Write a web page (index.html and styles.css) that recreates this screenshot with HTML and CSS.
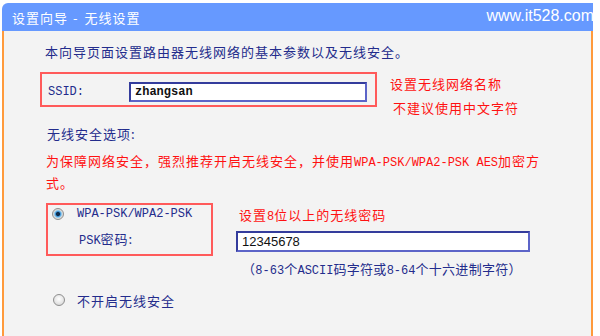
FILE: index.html
```html
<!DOCTYPE html>
<html lang="zh-CN">
<head>
  <meta charset="UTF-8" />
  <title>设置向导 - 无线设置</title>
  <link rel="stylesheet" href="styles.css">
</head>
<body>
  <div class="panel">
    <div class="titlebar">
      <span class="title">设置向导<span class="dash">-</span>无线设置</span>
      <span class="site">www.it528.com</span>
    </div>

    <div class="content">
      <p class="intro">本向导页面设置路由器无线网络的基本参数以及无线安全。</p>

      <div class="ssid-row">
        <div class="redbox ssid-box">
          <label class="en ssid-label">SSID:</label>
          <input class="text-input ssid-input" type="text" value="zhangsan" />
        </div>
        <div class="note ssid-note">
          <div>设置无线网络名称</div>
          <div class="note-second">不建议使用中文字符</div>
        </div>
      </div>

      <p class="section-label">无线安全选项:</p>
      <p class="warn">为保障网络安全，强烈推荐开启无线安全，并使用<span class="en">WPA-PSK/WPA2-PSK AES</span>加密方<br>式。</p>

      <div class="wpa-row">
        <div class="redbox wpa-box">
          <div class="radio-line">
            <span class="radio on"></span>
            <span class="en">WPA-PSK/WPA2-PSK</span>
          </div>
          <div class="psk-label"><span class="en">PSK</span>密码:</div>
        </div>
        <div class="wpa-fields">
          <div class="note">设置<span class="en">8</span>位以上的无线密码</div>
          <input class="text-input psk-input" type="text" value="12345678" />
          <div class="hint">（<span class="en">8-63</span>个<span class="en">ASCII</span>码字符或<span class="en">8-64</span>个十六进制字符）</div>
        </div>
      </div>

      <div class="radio-line off-line">
        <span class="radio"></span>
        <span>不开启无线安全</span>
      </div>
    </div>
  </div>
</body>
</html>
```

FILE: styles.css
```css
:root {
  --blue: #6699ff;
  --orange: #ff9a3c;
  --panel: #f3f3f3;
  --navy: #232c8c;
  --red: #ff1111;
  --box-red: #ff5a5a;
}

* { box-sizing: border-box; }

html, body {
  margin: 0;
  background: #ffffff;
  font-family: "Noto Sans CJK SC", "DejaVu Sans", sans-serif;
  font-size: 13px;
  letter-spacing: 1px;
  color: var(--navy);
}

p { margin: 0; }

.en {
  font-family: "Liberation Mono", monospace;
  font-size: 12px;
  letter-spacing: 0;
}

.panel {
  width: 591px;
  margin: 3px 0 0 2px;
}

.titlebar {
  height: 28px;
  display: flex;
  align-items: center;
  justify-content: space-between;
  padding-left: 10px;
  background: var(--blue);
  border-top-left-radius: 6px;
  color: #ffffff;
  overflow: hidden;
}

.title {
  font-size: 13px;
  margin-top: 1px;
  white-space: nowrap;
}

.dash {
  display: inline-block;
  margin: 0 6px 0 5px;
}

.site {
  font-family: "Liberation Sans", sans-serif;
  font-size: 16px;
  letter-spacing: 0;
  margin-top: -3px;
  margin-right: -1px;
}

.content {
  background: var(--panel);
  border-left: 2px solid var(--orange);
  border-right: 2px solid var(--orange);
  border-bottom: 2px solid var(--orange);
  padding: 11px 0 26px 36px;
}

.intro {
  line-height: 20px;
  margin-left: 5px;
}

.redbox {
  border: 2px solid var(--box-red);
}

.ssid-row {
  display: flex;
  align-items: flex-start;
  margin-top: 10px;
}

.ssid-box {
  width: 337px;
  display: flex;
  align-items: center;
  padding: 8px 0 3px 6px;
}

.ssid-label {
  width: 81px;
  color: var(--navy);
}

.text-input {
  height: 20px;
  padding: 0 4px;
  background: #ffffff;
  border: 2px solid #343c9c;
  border-right-color: #5c64c8;
  border-bottom-color: #5c64c8;
  outline: none;
  color: #111111;
}

.ssid-input {
  width: 238px;
  font-family: "Liberation Mono", monospace;
  font-size: 12px;
  font-weight: bold;
}

.note {
  color: var(--red);
  line-height: 20px;
}

.ssid-note {
  margin-left: 13px;
  margin-top: 3px;
  line-height: 18px;
}

.note-second {
  margin-top: 6px;
  padding-left: 3px;
}

.section-label {
  margin: 7px 0 0 7px;
  line-height: 20px;
}

.warn {
  margin: 7px 0 0 6px;
  line-height: 20px;
  color: var(--red);
}

.wpa-row {
  display: flex;
  align-items: flex-start;
  margin: 10px 0 0 6px;
}

.wpa-box {
  width: 167px;
  padding: 0 0 4px 4px;
}

.radio-line {
  display: flex;
  align-items: center;
  gap: 13px;
  height: 18px;
}

.psk-label {
  margin: 7px 0 0 27px;
  line-height: 18px;
}

.radio {
  flex: none;
  width: 12px;
  height: 12px;
  border-radius: 50%;
  border: 1px solid #8e8e8e;
  background: radial-gradient(circle at 50% 40%, #ffffff 0, #e6e6e6 55%, #cccccc 100%);
}

.radio.on {
  background: radial-gradient(circle, #0f2c4c 0 1.6px, #3a8ccf 2.4px, #86c8f0 3.4px, #d8d8d8 4.3px, #f0f0f0 100%);
}

.wpa-fields {
  margin-left: 23px;
  padding-top: 2px;
}

.wpa-fields .note {
  margin-left: 3px;
}

.psk-input {
  display: block;
  width: 294px;
  height: 21px;
  margin-top: 4px;
  font-family: "Liberation Sans", sans-serif;
  font-size: 13px;
}

.hint {
  margin: 8px 0 0 6px;
  line-height: 18px;
  font-size: 13px;
  letter-spacing: 0.3px;
}

.off-line {
  height: 20px;
  margin: 10px 0 0 13px;
  gap: 12px;
}
```
